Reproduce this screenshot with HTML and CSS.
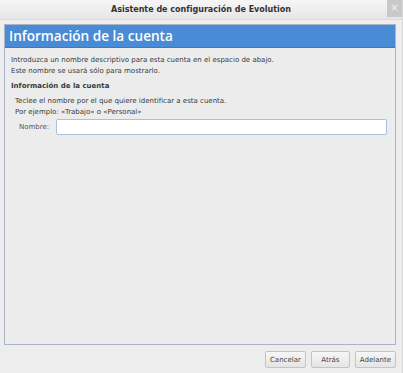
FILE: index.html
```html
<!DOCTYPE html>
<html lang="es">
<head>
<meta charset="UTF-8">
<title>Asistente de configuración de Evolution</title>
<link rel="stylesheet" href="styles.css">
</head>
<body>
<div class="window">
    <div class="titlebar">
        <span class="title">Asistente de configuración de Evolution</span>
        <span class="close">&#215;</span>
    </div>
    <div class="panel">
        <div class="banner">Información de la cuenta</div>
        <div class="content">
            <p class="intro">Introduzca un nombre descriptivo para esta cuenta en el espacio de abajo.<br>Este nombre se usará sólo para mostrarlo.</p>
            <h2 class="section">Información de la cuenta</h2>
            <div class="section-body">
                <p class="hint">Teclee el nombre por el que quiere identificar a esta cuenta.<br>Por ejemplo: «Trabajo» o «Personal»</p>
                <div class="field">
                    <label for="name">Nombre:</label>
                    <input id="name" type="text">
                </div>
            </div>
        </div>
    </div>
    <div class="actions">
        <button>Cancelar</button>
        <button class="wide">Atrás</button>
        <button>Adelante</button>
    </div>
</div>
</body>
</html>
```

FILE: styles.css
```css
body {
    margin: 0;
    padding: 0;
    background-color: #ededed;
    font-family: "DejaVu Sans", sans-serif;
    color: #3a3a3a;
}

.window {
    width: 403px;
    height: 373px;
    display: flex;
    flex-direction: column;
    background-color: #ededed;
    box-sizing: border-box;
    border-right: 1px solid #d8d8d8;
}

/* barra de título */
.titlebar {
    height: 19px;
    display: flex;
    align-items: center;
    justify-content: center;
    position: relative;
    background: linear-gradient(#f6f6f6, #e6e6e6);
    border-bottom: 1px solid #dcdcdc;
}

.title {
    font-size: 8px;
    font-weight: bold;
    color: #333;
}

.close {
    position: absolute;
    top: 0;
    right: 0;
    width: 15px;
    height: 17px;
    background-color: #c9c9c9;
    color: #f4f4f4;
    font-size: 10px;
    line-height: 16px;
    text-align: center;
}

/* panel principal */
.panel {
    margin: 4px 6px 0 4px;
    height: 321px;
    border: 1px solid #aab4c6;
    background-color: #ececec;
    box-sizing: border-box;
}

.banner {
    height: 22px;
    background-color: #4a8bd6;
    color: #ffffff;
    font-family: "Open Sans", sans-serif;
    font-weight: 600;
    font-size: 13.6px;
    line-height: 21px;
    padding-left: 4px;
    border-bottom: 1px solid #3f78bb;
}

.content {
    padding: 7px 6px 0 6px;
    font-size: 7px;
}

.intro {
    margin: 0;
    line-height: 11px;
}

.section {
    margin: 4px 0 0 0;
    font-size: 7px;
    font-weight: bold;
    line-height: 10px;
}

.section-body {
    padding-left: 4px;
}

.hint {
    margin: 5px 0 0 0;
    line-height: 11px;
}

.field {
    display: flex;
    align-items: center;
    gap: 7px;
    margin-top: 1px;
    padding-left: 4px;
}

.field label {
    color: #555;
}

.field input {
    flex: 1;
    height: 16px;
    margin-right: 2px;
    box-sizing: border-box;
    border: 1px solid #a9c1dc;
    background-color: #ffffff;
    border-radius: 2px;
    padding: 0;
}

/* botones */
.actions {
    display: flex;
    justify-content: flex-end;
    gap: 5px;
    padding: 6px 6px 0 0;
}

.actions button {
    height: 17px;
    padding: 0 4px;
    font-family: "DejaVu Sans", sans-serif;
    font-size: 7px;
    color: #444;
    background: linear-gradient(#f7f7f7, #e4e4e4);
    border: 1px solid #c4c4c4;
    border-radius: 2px;
}

.actions button.wide {
    width: 39px;
}
```
